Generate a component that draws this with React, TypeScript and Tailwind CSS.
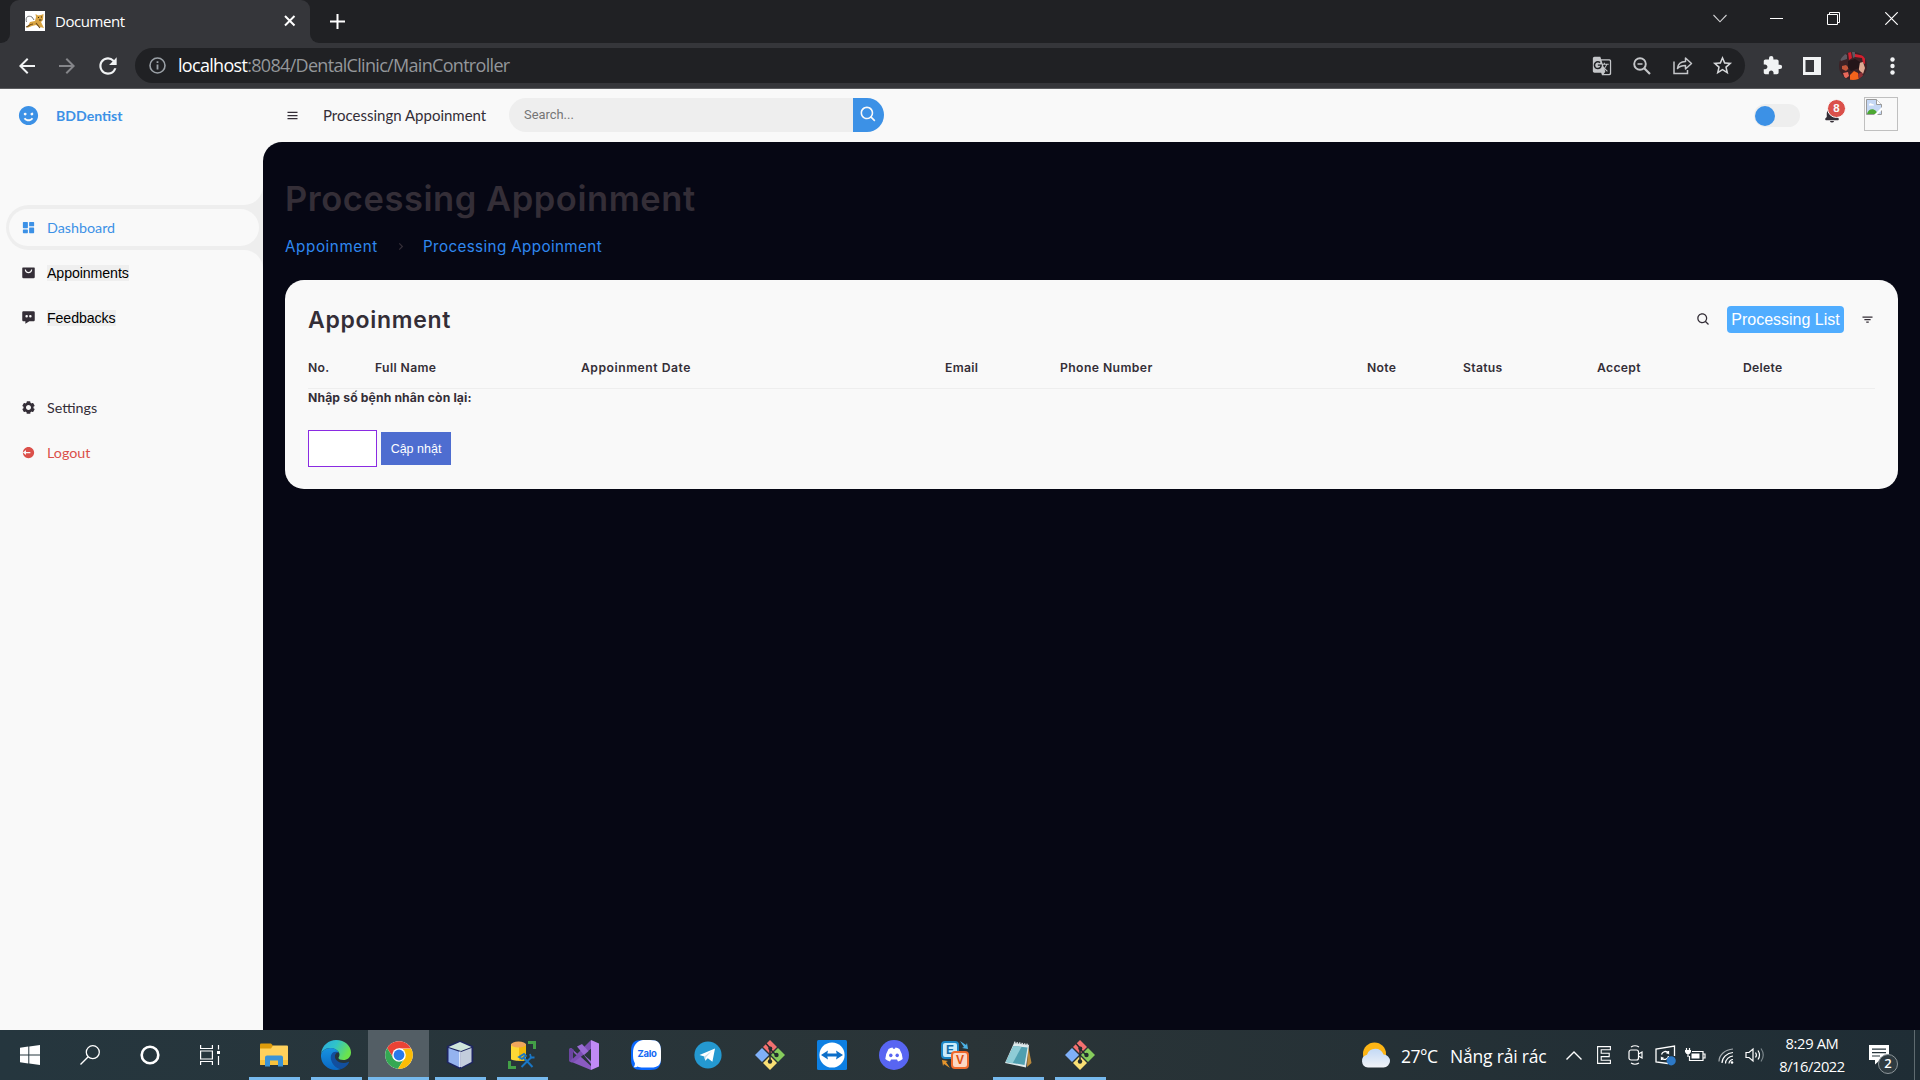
import React from "react";
import {
  BiMenu,
  BiSearch,
  BiFilter,
  BiChevronRight,
  BiSolidSmile,
  BiSolidDashboard,
  BiSolidShoppingBagAlt,
  BiSolidMessageDots,
  BiSolidCog,
  BiSolidLogOutCircle,
  BiSolidBell,
} from "react-icons/bi";
import { MdGTranslate, MdExtension, MdStarBorder, MdArrowBack, MdArrowForward, MdRefresh } from "react-icons/md";

/* ---------- Browser chrome ---------- */

function TomcatIcon() {
  return (
    <svg width="20" height="20" viewBox="0 0 20 20">
      <rect width="20" height="20" fill="#fff" />
      <path d="M2 17 L5 11 L10 10 L11 6 L10.500 3 L13 4.500 L16 4 L18.500 3 L18 9 L16 11 L19 17 L15 16 L11 14 L7 15 Z" fill="#d9a441" />
      <path d="M1 16 C4 15 5 13 8 13 M11 12 L15 17" stroke="#6b4a1a" strokeWidth="1.200" fill="none" />
      <path d="M1.500 11 C0 6 3 4 7 6 L9 9" stroke="#77787a" strokeWidth="1" fill="none" />
      <path d="M13 6.500h1M16 6h1M14 9h2.500" stroke="#3a2b12" strokeWidth="1" />
    </svg>
  );
}

function TabStrip() {
  return (
    <div className="flex h-[43px] bg-[#202124]">
      <div className="flex w-[10px] bg-[#35363a]">
        <div className="h-full w-full rounded-br-[9px] bg-[#202124]" />
      </div>
      <div className="flex h-full w-[300px] items-center rounded-t-[9px] bg-[#35363a] pb-[1px] pl-[15px] pr-[14px]">
        <TomcatIcon />
        <span className="ml-[10px] flex-1 font-['Open_Sans'] text-[15px] tracking-[-0.45px] text-white">Document</span>
        <svg width="12" height="12" viewBox="0 0 12 12" stroke="#fff" strokeWidth="2">
          <path d="M1 1l9.500 9.500M10.500 1L1 10.500" />
        </svg>
      </div>
      <div className="flex w-[10px] bg-[#35363a]">
        <div className="h-full w-full rounded-bl-[9px] bg-[#202124]" />
      </div>
      <div className="flex flex-1 items-center pl-[10px]">
        <svg width="15" height="15" viewBox="0 0 15 15" stroke="#fff" strokeWidth="2">
          <path d="M7.500 0v15M0 7.500h15" />
        </svg>
      </div>
      <div className="flex items-start pr-[22px] pt-[12px]">
        <svg className="mr-[43px] mt-[2px]" width="14" height="9" viewBox="0 0 14 9" fill="none" stroke="#d0d1d3" strokeWidth="1.100">
          <path d="M.5 1L7 7.800L13.500 1" />
        </svg>
        <svg className="mr-[44px]" width="13" height="13" viewBox="0 0 13 13" stroke="#fff">
          <path d="M0 6.500h13" />
        </svg>
        <svg className="mr-[45px]" width="13" height="13" viewBox="0 0 13 13" fill="none" stroke="#fff">
          <path d="M.5 2.500h10v10h-10zM2.500 2.500v-2h10v10h-2" />
        </svg>
        <svg width="13" height="13" viewBox="0 0 13 13" fill="none" stroke="#fff" strokeWidth="1.200">
          <path d="M.3 .3l12.400 12.400M12.700 .3L.3 12.700" />
        </svg>
      </div>
    </div>
  );
}

function Avatar() {
  return (
    <svg width="28" height="28" viewBox="0 0 28 28">
      <defs>
        <clipPath id="avatarClip">
          <circle cx="14" cy="14" r="14" />
        </clipPath>
      </defs>
      <g clipPath="url(#avatarClip)">
        <rect width="28" height="28" fill="#3c2226" />
        <path d="M9 0h3l1 6-3 2zM16 2l10 2v8l-2-1-1-5-7-1z" fill="#d3202f" />
        <path d="M0 6l5-5 3 2v4l-6 2zM13 0h3v5l-2 1z" fill="#5d5a63" />
        <path d="M3 14l4-1 3 3-3 3-4-2z" fill="#c4553a" />
        <path d="M20 11l4-1 2 6-2 6-4-4z" fill="#e0a992" />
        <path d="M9 9l7-2 5 3-1 6-8 3-3-3z" fill="#241519" />
        <path d="M11 23l4-4 4 2 1 7h-9z" fill="#f4631b" />
        <path d="M4 21l5-1 1 4-4 3z" fill="#e9685a" />
        <path d="M19 22l4-2 1 4-4 3z" fill="#8c2f36" />
      </g>
    </svg>
  );
}

function AddressBar() {
  return (
    <div className="flex h-[46px] items-center border-b border-[#5b5c5f] bg-[#35363a]">
      <MdArrowBack className="ml-[15px] text-[#f1f3f4]" size={24} />
      <MdArrowForward className="ml-[16px] text-[#85868a]" size={24} />
      <MdRefresh className="ml-[16px] text-[#f1f3f4]" size={26} />
      <div className="ml-[14px] flex h-[35px] w-[1610px] items-center rounded-full bg-[#202124] pl-[14px] pr-[11px]">
        <svg width="17" height="17" viewBox="0 0 17 17" fill="none" stroke="#9aa0a6" strokeWidth="1.600">
          <circle cx="8.500" cy="8.500" r="7.500" />
          <path d="M8.500 7.500v5M8.500 4.300v1.700" strokeWidth="1.800" />
        </svg>
        <span className="mt-[-2px] ml-[12px] flex-1 font-['Open_Sans'] text-[18px] leading-none tracking-[-0.69px] text-[#94979b]">
          <span className="text-white">localhost</span>:8084/DentalClinic/MainController
        </span>
        <MdGTranslate className="text-[#c4c6c9]" size={20} />
        <svg className="ml-[21px]" width="18" height="18" viewBox="0 0 18 18" fill="none" stroke="#c4c6c9" strokeWidth="1.900">
          <circle cx="7" cy="7" r="5.800" />
          <path d="M11.200 11.200l5.800 5.800" strokeWidth="2.200" />
          <path d="M4.500 7h5" strokeWidth="1.500" />
        </svg>
        <svg className="ml-[22px]" width="20" height="19" viewBox="0 0 20 19" fill="none" stroke="#c4c6c9" strokeWidth="1.500">
          <path d="M1 5.500v12h13.500v-3.500" />
          <path d="M4.500 12.500c.5-4.500 3.500-7 8-7V2l6 5.500-6 5.500V9.500c-4 0-6 .8-8 3z" strokeLinejoin="round" />
        </svg>
        <MdStarBorder className="ml-[18px] text-[#d5d7d9]" size={23} />
      </div>
      <MdExtension className="ml-[17px] text-[#f1f3f4]" size={21} />
      <svg className="ml-[20px]" width="18" height="18" viewBox="0 0 18 18">
        <rect width="18" height="18" fill="#f1f3f4" />
        <rect x="2.500" y="3" width="8.500" height="12" fill="#35363a" />
      </svg>
      <div className="ml-[18px]">
        <Avatar />
      </div>
      <svg className="ml-[23px]" width="5" height="18" viewBox="0 0 5 18" fill="#f1f3f4">
        <circle cx="2.500" cy="2.500" r="2.200" />
        <circle cx="2.500" cy="9" r="2.200" />
        <circle cx="2.500" cy="15.500" r="2.200" />
      </svg>
    </div>
  );
}

/* ---------- Page ---------- */

function MenuItem({ icon, children, className = "" }: { icon: React.ReactNode; children: React.ReactNode; className?: string }) {
  return (
    <li className={"flex h-[45px] items-center pl-[21px] " + className}>
      <span className="flex w-[26px]">{icon}</span>
      {children}
    </li>
  );
}

function Sidebar() {
  return (
    <aside className="flex w-[263px] flex-col bg-[#f9f9f9] font-['Lato'] text-[14.3px] text-[#342e37]">
      <div className="flex h-[53px] items-center pl-[17px] text-[#3c91e6]">
        <BiSolidSmile size={23} />
        <span className="ml-[16px] mt-[1px] text-[14.1px] font-bold">BDDentist</span>
      </div>
      <ul className="mt-[63px]">
        <li className="relative ml-[6px] h-[45px] rounded-l-full bg-[#eee] p-[4px] pl-[3px]">
          <div className="flex h-full items-center rounded-full bg-[#f9f9f9] pl-[12px] text-[#3c91e6]">
            <BiSolidDashboard size={15} />
            <span className="ml-[11px]">Dashboard</span>
          </div>
          <div className="absolute right-0 top-[-19px] size-[19px] bg-[#eee]">
            <div className="size-full rounded-br-full bg-[#f9f9f9]" />
          </div>
          <div className="absolute bottom-[-19px] right-0 size-[19px] bg-[#eee]">
            <div className="size-full rounded-tr-full bg-[#f9f9f9]" />
          </div>
        </li>
        <MenuItem icon={<BiSolidShoppingBagAlt size={15} />}>
          <span className="bg-[#efefef] font-['Liberation_Sans'] text-[14.2px] leading-[16px] tracking-[-0.1px] text-black">Appoinments</span>
        </MenuItem>
        <MenuItem icon={<BiSolidMessageDots size={15} />}>
          <span className="bg-[#efefef] font-['Liberation_Sans'] text-[14.2px] leading-[16px] tracking-[-0.1px] text-black">Feedbacks</span>
        </MenuItem>
      </ul>
      <ul className="mt-[45px]">
        <MenuItem icon={<BiSolidCog size={15} />}>Settings</MenuItem>
        <MenuItem className="text-[#db504a]" icon={<BiSolidLogOutCircle size={15} />}>
          Logout
        </MenuItem>
      </ul>
    </aside>
  );
}

function BrokenImage() {
  return (
    <div className="mt-[-2px] size-[34px] border border-[#c0c0c0] pl-[1px] pt-[1px]">
      <svg width="16" height="16" viewBox="0 0 16 16">
        <path d="M.5 .5h10l5 5v10h-15z" fill="#c5d8f5" stroke="#9a9a9a" />
        <path d="M3 6c0-2 2-2.500 3-1 1.500-.3 2 .5 2 1.500H3z" fill="#fff" />
        <path d="M1 15c1-5 6-6 9-3l2 3z" fill="#4ca832" />
        <path d="M10.500 .5v5h5" fill="#fff" stroke="#9a9a9a" />
        <path d="M8 16l8-8v3l-5 5z" fill="#fff" />
      </svg>
    </div>
  );
}

function Navbar() {
  return (
    <nav className="flex h-[53px] items-center bg-[#f9f9f9] pb-[1px] pl-[22px] pr-[22px] text-[#342e37]">
      <BiMenu size={15} />
      <span className="ml-[23px] mt-[1px] w-[186px] whitespace-nowrap font-['Lato'] text-[15px]">Processingn Appoinment</span>
      <div className="flex h-[34px] w-[375px] overflow-hidden rounded-full">
        <div className="flex flex-1 items-center bg-[#eee] pl-[15px] font-['Roboto'] text-[12.9px] text-[#757575]">Search...</div>
        <div className="flex w-[31px] items-center bg-[#3c91e6] pb-[1px] pl-[6px] text-[#f9f9f9]">
          <BiSearch size={19} />
        </div>
      </div>
      <div className="ml-auto mt-[1px] flex h-[23px] w-[46px] items-center rounded-full bg-[#eee] pl-[1px]">
        <div className="size-[20px] rounded-full bg-[#3c91e6]" />
      </div>
      <div className="relative ml-[23px] mr-[23px] w-[18px]">
        <BiSolidBell size={18} />
        <div className="absolute left-[4px] top-[-7px] flex size-[19px] items-center justify-center rounded-full border border-[#f9f9f9] bg-[#db504a] font-['Liberation_Sans'] text-[11.5px] font-bold text-[#f9f9f9]">
          8
        </div>
      </div>
      <BrokenImage />
    </nav>
  );
}

function TableHead() {
  return (
    <div className="flex h-[42px] items-center border-b border-[#eee] pt-[2px] text-[12.2px] font-semibold leading-none tracking-[0.3px]">
      <span className="w-[67px]">No.</span>
      <span className="w-[206px] tracking-[0.37px]">Full Name</span>
      <span className="w-[364px] tracking-[0.5px]">Appoinment Date</span>
      <span className="w-[115px]">Email</span>
      <span className="w-[307px] tracking-[0.4px]">Phone Number</span>
      <span className="w-[96px]">Note</span>
      <span className="w-[134px]">Status</span>
      <span className="w-[146px]">Accept</span>
      <span>Delete</span>
    </div>
  );
}

function Main() {
  return (
    <main className="flex-1 rounded-tl-[19px] bg-[#060714] px-[22px] font-['Inter'] text-[#342e37]">
      <h1 className="pt-[35px] text-[34.5px] font-semibold leading-[44px] tracking-[0.55px]">Processing Appoinment</h1>
      <div className="mt-[13px] flex h-[26px] items-center text-[15.2px] text-[#2f88f0]">
        <span className="w-[108px] tracking-[0.6px]">Appoinment</span>
        <BiChevronRight className="mt-[-2px] text-[#342e37]" size={15} />
        <span className="ml-[15px] tracking-[0.38px]">Processing Appoinment</span>
      </div>
      <section className="mt-[20px] h-[209px] rounded-[19px] bg-[#f9f9f9] px-[23px] pt-[22px]">
        <div className="flex h-[34px] items-center">
          <h3 className="flex-1 pt-[2px] text-[23px] font-semibold tracking-[0.7px]">Appoinment</h3>
          <BiSearch size={15} />
          <div className="ml-[16px] mt-[1px] flex h-[27px] w-[117px] items-center justify-center rounded-[4px] bg-[#50adff] font-['Liberation_Sans'] text-[16px] text-white">
            Processing List
          </div>
          <BiFilter className="ml-[16px]" size={15} />
        </div>
        <div className="mt-[11px]">
          <TableHead />
        </div>
        <p className="text-[12.2px] font-bold leading-[18px] tracking-[0.13px]">Nhập số bệnh nhân còn lại:</p>
        <div className="mt-[23px] flex items-center gap-[4px]">
          <div className="h-[37px] w-[69px] border border-[#8a2be2] bg-white" />
          <div className="flex h-[33px] w-[70px] items-center justify-center bg-[#4e6dd0] pt-[1px] font-['Liberation_Sans'] text-[12.5px] text-white">
            Cập nhật
          </div>
        </div>
      </section>
    </main>
  );
}

/* ---------- Taskbar ---------- */

const WindowsIcon = () => (
  <svg width="20" height="20" viewBox="0 0 20 20" fill="#fff">
    <path d="M0 2.800L8.300 1.600V9.500H0zM9.300 1.400L20 0v9.500H9.300zM0 10.500h8.300v7.900L0 17.200zM9.300 10.500H20V20L9.300 18.600z" />
  </svg>
);

const SearchGlass = () => (
  <svg width="20" height="20" viewBox="0 0 20 20" fill="none" stroke="#fff" strokeWidth="1.300">
    <circle cx="12.800" cy="7.200" r="6.500" />
    <path d="M8.200 11.800L.5 19.500" />
  </svg>
);

const CortanaIcon = () => (
  <svg width="20" height="20" viewBox="0 0 20 20">
    <circle cx="10" cy="10" r="8.300" fill="none" stroke="#fff" strokeWidth="2.600" />
  </svg>
);

const TaskViewIcon = () => (
  <svg width="20" height="20" viewBox="0 0 20 20" fill="none" stroke="#fff" strokeWidth="1.200">
    <path d="M.6 0v3.500h11.800V0M.6 20v-3.500h11.800V20M.6 6h11.800v8H.6zM18.500 0v4.500M18.500 11v9" />
    <rect x="17" y="6" width="3" height="3" fill="#fff" stroke="none" />
  </svg>
);

const ExplorerIcon = () => (
  <svg width="28" height="24" viewBox="0 0 28 24">
    <path d="M0 1.500Q0 .5 1 .5h10l2 2v5H0z" fill="#dd9b0b" />
    <path d="M0 5.500h11l2-3h14q1 0 1 1V21q0 1-1 1H1q-1 0-1-1z" fill="#ffd15c" />
    <path d="M0 17h28v4q0 1-1 1H1q-1 0-1-1z" fill="#f9c23c" />
    <path d="M5 23.500V14.500q0-2 2-2h14q2 0 2 2v9h-5v-6h-8v6z" fill="#3a93d6" />
  </svg>
);

const EdgeIcon = () => (
  <svg width="30" height="30" viewBox="0 0 30 30">
    <defs>
      <linearGradient id="edgeTop" x1="0" y1="0" x2="1" y2=".4">
        <stop offset="0" stopColor="#2ba8e0" />
        <stop offset=".5" stopColor="#30c3c9" />
        <stop offset="1" stopColor="#6be34c" />
      </linearGradient>
      <linearGradient id="edgeLow" x1="0" y1="0" x2="0" y2="1">
        <stop offset="0" stopColor="#1793e0" />
        <stop offset="1" stopColor="#0a68c4" />
      </linearGradient>
    </defs>
    <path d="M0 14C1 5 8 0 15 0c9 0 15 6 15 12.500 0 5-4 7.500-7.500 7.500-3 0-5-1-5-2 0-1 1-1.500 1-3.500C18.500 11 14 8 9.500 8 4.500 8 1 11 0 14z" fill="url(#edgeTop)" />
    <path d="M0 15C.5 11 4.500 8 9.500 8c4 0 7 2 8.300 4.500-5-2-8 2-7 7C12 26 17 28 20 29c-2 .8-4 1-5 1C6 30-.5 23 0 15z" fill="url(#edgeLow)" />
    <path d="M17 12.200c-5-1.500-8 2-7 7.300C11.500 26 17 29 20.500 29c3-1 6-3.500 7.500-6.500.3-.6-.3-.9-.8-.6C21 25 13 21 14 15.500c.3-1.500 1.500-3 3-3.300z" fill="#124f9e" />
  </svg>
);

const ChromeIcon = () => (
  <svg width="28" height="28" viewBox="0 0 28 28">
    <circle cx="14" cy="14" r="13.800" fill="#fff" />
    <path d="M14 7.500h12.100A13.800 13.800 0 0 0 2.100 7l6.200 10z" fill="#ea4335" />
    <path d="M2.100 7A13.800 13.800 0 0 0 13 27.800l6.500-10.500-11.100 0z" fill="#34a853" />
    <path d="M26.100 7.500A13.800 13.800 0 0 1 13 27.800l6.700-10.600L18 8z" fill="#fbbc05" />
    <circle cx="14" cy="14" r="6.800" fill="#fff" />
    <circle cx="14" cy="14" r="5.400" fill="#2a79ea" />
  </svg>
);

const NetBeansIcon = () => (
  <svg width="28" height="30" viewBox="0 0 28 30">
    <path d="M14 2l12 5v15l-12 6L2 22V7z" fill="#1d2560" stroke="#1d2560" strokeWidth="2.500" strokeLinejoin="round" />
    <path d="M14 2l11.500 5-10.500 4L2.500 7z" fill="#cfe5dc" />
    <path d="M2.500 8l11.500 4v15.500L2.500 22z" fill="#94b3ef" />
    <path d="M15 12l10.500-4v14L15 27.500z" fill="#c3cddc" />
    <path d="M14 11.500V27" stroke="#eef4ff" strokeWidth="1.500" />
  </svg>
);

const SqlIcon = () => (
  <svg width="28" height="28" viewBox="0 0 28 28">
    <path d="M3 3v15c0 2 15 3 15 0V3z" fill="#fdd835" />
    <path d="M11 5v15c4 0 7-1 7-2V3z" fill="#f2b90c" />
    <ellipse cx="10.500" cy="3.500" rx="7.500" ry="3" fill="#f0a65c" />
    <path d="M20 1.500h6.500V8M1.500 20v6.500H8" fill="none" stroke="#43a047" strokeWidth="3" />
    <path d="M13.500 26l10-10M24.500 26L15 16" stroke="#1976c5" strokeWidth="2" />
    <path d="M11 16l5-3 2 2-4 3zM22 13l1 3.500 3.500 0" fill="none" stroke="#1976c5" strokeWidth="1.800" />
  </svg>
);

const VisualStudioIcon = () => (
  <svg width="30" height="30" viewBox="0 0 30 30">
    <path d="M0 9l2-1 20 18v4L1.500 21.500 0 21z" fill="#8a5bc2" />
    <path d="M0 9l2.500-1L5 10v10l-3.500 2L0 21z" fill="#6b45a0" />
    <path d="M1 21L22 0v9L5 22l-3 .5z" fill="#7c50b4" />
    <path d="M22 0l8 3.500v23L22 30z" fill="#c08af5" />
    <path d="M8 6.500l5-2.500 9 10v10z" fill="#9a6bd4" />
    <path d="M4 12v6.500l3.500-3.200z" fill="#2a373d" />
    <path d="M22 9v12l-7-6z" fill="#2a373d" />
  </svg>
);

const ZaloIcon = () => (
  <div className="relative flex size-[30px] items-center justify-center">
    <svg className="absolute inset-0" width="30" height="30" viewBox="0 0 30 30">
      <path d="M11 0h8c8 0 11 3 11 11v8c0 8-3 11-11 11h-8C3 30 0 27 0 19v-8C0 3 3 0 11 0z" fill="#0a68ff" />
      <path d="M12 0h7c8 0 11 3 11 11v7c0 7-3 9.500-10 9.500h-8c-2 0-4-.4-5.500-1-1 .8-2.500 1-4 .8 1-1 1.500-2.500 1.400-4C2 20 2 17 2 13 2 5 6 1 12 0z" fill="#fff" />
    </svg>
    <span className="relative ml-[2px] mt-[-2px] font-['Inter'] text-[9.5px] font-bold tracking-[-0.3px] text-[#1268f3]">Zalo</span>
  </div>
);

const TelegramIcon = () => (
  <svg width="28" height="28" viewBox="0 0 28 28">
    <circle cx="14" cy="14" r="13.600" fill="#2498d0" />
    <path d="M5.500 14L21 7.500l-2.600 13.200-4.600-3.500-2.600 2.500-.9-4.300z" fill="#fff" />
    <path d="M10.300 15.400L18 9.800l-6.300 6.800-.5 3z" fill="#c4dcea" />
  </svg>
);

const GitIcon = () => (
  <svg width="30" height="30" viewBox="0 0 30 30">
    <path d="M15 0l7 7-7 7-7-7z" fill="#f2706f" />
    <path d="M23 8l7 7-7 7-7-7z" fill="#86cc5c" />
    <path d="M7 8l7 7-7 7-7-7z" fill="#7fb0f8" />
    <path d="M15 16l7 7-7 7-7-7z" fill="#f9df74" />
    <path d="M11 3.500l4 4.500v13M15 9l6 6" fill="none" stroke="#222b2e" strokeWidth="1.500" />
    <circle cx="15.300" cy="8.500" r="2" fill="#222b2e" />
    <circle cx="21.500" cy="15" r="2.200" fill="#222b2e" />
    <circle cx="15" cy="21.500" r="2.200" fill="#222b2e" />
  </svg>
);

const TeamViewerIcon = () => (
  <svg width="30" height="30" viewBox="0 0 30 30">
    <rect width="30" height="30" rx="1.500" fill="#0d7fe2" />
    <circle cx="15" cy="15" r="12.600" fill="#fff" />
    <path d="M4 15l7-4.500-.7 3h9.400l-.7-3 7 4.500-7 4.500.7-3h-9.400l.7 3z" fill="#0d6fc9" />
  </svg>
);

const DiscordIcon = () => (
  <svg width="30" height="30" viewBox="0 0 30 30">
    <circle cx="15" cy="15" r="15" fill="#5865f2" />
    <path d="M9.500 9q2-1.200 4-1.500l.6 1.200h1.800l.6-1.200q2 .3 4 1.500 3 5 3.200 10-2 1.800-4.700 2.500l-1-1.900h-6l-1 1.900Q8.300 20.800 6.300 19q.2-5 3.200-10z" fill="#fff" />
    <ellipse cx="11.800" cy="15.300" rx="1.700" ry="1.900" fill="#5865f2" />
    <ellipse cx="18.200" cy="15.300" rx="1.700" ry="1.900" fill="#5865f2" />
  </svg>
);

const EvIcon = () => (
  <div className="relative mr-[2px] size-[30px] font-['Liberation_Sans'] font-bold">
    <svg className="absolute inset-0" width="30" height="30" viewBox="0 0 30 30">
      <path d="M20 1l6 4 1-2 1 6-6-1 2-1z" fill="#4cb2e6" />
      <path d="M10 28l-6-4-1 2-1-6 6 1-2 1z" fill="#e5952c" />
    </svg>
    <div className="absolute left-px top-px flex size-[18px] items-center justify-center rounded-[4px] border-2 border-[#1c86c5] bg-[#c9ecfb] text-[12px] leading-none text-[#136aa5]">E</div>
    <div className="absolute bottom-px right-px flex size-[18px] items-center justify-center rounded-[4px] border-2 border-[#ef6a2c] bg-[#fbd8c4] text-[12px] leading-none text-[#e04f10]">V</div>
  </div>
);

const NotepadIcon = () => (
  <svg width="28" height="28" viewBox="0 0 28 28">
    <path d="M24 4l3.500 18-4.500 4z" fill="#b98a3e" />
    <path d="M10 2l15 2-3 22.500L1 22z" fill="#dfeaec" />
    <path d="M9.500 5l14 1.500-3 17.500L2 21z" fill="#4f9fb0" />
    <path d="M9.500 5l8 1-9 16.500L2 21z" fill="#8fccd6" />
    <path d="M10 1.500l15 2.500" stroke="#d3d9dc" strokeWidth="2" strokeDasharray="1.500 1" />
  </svg>
);

const systemButtons = [WindowsIcon, SearchGlass, CortanaIcon, TaskViewIcon];

const apps: { Icon: () => React.JSX.Element; state?: "open" | "active" }[] = [
  { Icon: ExplorerIcon, state: "open" },
  { Icon: EdgeIcon, state: "open" },
  { Icon: ChromeIcon, state: "active" },
  { Icon: NetBeansIcon, state: "open" },
  { Icon: SqlIcon, state: "open" },
  { Icon: VisualStudioIcon },
  { Icon: ZaloIcon },
  { Icon: TelegramIcon },
  { Icon: GitIcon },
  { Icon: TeamViewerIcon },
  { Icon: DiscordIcon },
  { Icon: EvIcon },
  { Icon: NotepadIcon, state: "open" },
  { Icon: GitIcon, state: "open" },
];

function Weather() {
  return (
    <div className="flex items-center">
      <svg width="29" height="26" viewBox="0 0 29 26">
        <defs>
          <linearGradient id="cloud" x1="0" y1="0" x2="0" y2="1">
            <stop offset="0" stopColor="#c3d9f5" />
            <stop offset="1" stopColor="#f1f3f7" />
          </linearGradient>
        </defs>
        <circle cx="13.500" cy="12" r="11.500" fill="#fdb515" />
        <path d="M7 25.500a6.500 6.500 0 0 1-1-12.800A8.800 8.800 0 0 1 22.500 12.500 6.500 6.500 0 0 1 22.500 25.500z" fill="url(#cloud)" />
      </svg>
      <span className="ml-[11px] mt-[2px] w-[49px] tracking-[-0.5px]">27°C</span>
      <span className="mt-[2px] w-[116px] tracking-[-0.2px]">Nắng rải rác</span>
    </div>
  );
}

function Tray() {
  return (
    <div className="flex h-full items-center font-['Open_Sans'] text-[17.5px] text-white">
      <Weather />
      <svg width="16" height="9" viewBox="0 0 16 9" fill="none" stroke="#fff" strokeWidth="1.400">
        <path d="M.5 8.500L8 1l7.500 7.500" />
      </svg>
      <svg className="ml-[15px]" width="14" height="18" viewBox="0 0 14 18" fill="none" stroke="#fff" strokeWidth="1.100">
        <path d="M.6 .6h12.800v3.200H4.200v3.400h8v3.400h-8v3.600h9.200v3.200H.6z" />
      </svg>
      <svg className="ml-[17px]" width="15" height="20" viewBox="0 0 15 20" fill="none" stroke="#fff" strokeWidth="1.200">
        <rect x="1" y="5" width="9.500" height="10" rx="2" />
        <path d="M10.500 9l3.500-2v6l-3.500-2M3 2q4-2.500 8 0M3 18q4 2.500 8 0" />
      </svg>
      <svg className="ml-[12px]" width="21" height="21" viewBox="0 0 21 21" fill="none" stroke="#fff" strokeWidth="1.300">
        <path d="M13 18.500L1 17V4l18.500-3v10" />
        <path d="M6.500 9.500a4 4 0 0 1 7-1.500v-2M13.500 8h-2M13.500 11a4 4 0 0 1-7 2v2M6.500 13h2" />
        <circle cx="16.200" cy="15.800" r="4.600" fill="#2d79c7" stroke="none" />
      </svg>
      <svg className="ml-[9px]" width="21" height="15" viewBox="0 0 21 15" fill="none" stroke="#fff" strokeWidth="1.200">
        <path d="M7 3.500h11v9H4.500V8M18 6h2v4h-2" />
        <path d="M1.500 0v2M4.500 0v2M3 5v4" />
        <path d="M0 2h6v2L4.500 6h-3L0 4z" fill="#fff" stroke="none" />
        <rect x="6.500" y="5.500" width="8" height="5" fill="#fff" stroke="none" />
      </svg>
      <svg className="ml-[12px] mt-[2px]" width="16" height="16" viewBox="0 0 16 16" fill="none" stroke="#fff" strokeWidth="1.200">
        <path d="M1 13.500C1 7 7 1.500 15 1" stroke="#a5acb0" />
        <path d="M4 15C4 9.500 9 5 15 4.500M7.500 15.500C7.500 11.500 11 8.500 15 8" />
        <path d="M11 15.500c0-2 2-4 4-4" />
        <circle cx="14" cy="14.500" r="1.300" fill="#fff" stroke="none" />
      </svg>
      <svg className="ml-[11px]" width="20" height="16" viewBox="0 0 20 16" fill="none" stroke="#fff" strokeWidth="1.200">
        <path d="M1 5.500h3L8 2v12l-4-3.500H1z" />
        <path d="M10.500 5.500q1.800 2.500 0 5M13 3.500q3 4.500 0 9" />
        <path d="M16 1.500q4.500 6.500 0 13" stroke="#7b868b" />
      </svg>
      <div className="ml-[7px] flex w-[80px] flex-col items-center text-[14.7px] leading-[23px] tracking-[-0.45px]">
        <span className="tracking-[-0.35px]">8:29 AM</span>
        <span>8/16/2022</span>
      </div>
      <div className="relative ml-[17px] mt-[-1px] h-[20px] w-[20px]">
        <svg width="20" height="20" viewBox="0 0 20 20">
          <path d="M0 0h20v15h-9l-5 4.500V15H0z" fill="#fff" />
          <path d="M3 4.200h14M3 7.600h14M3 11h8" stroke="#26343b" strokeWidth="1.200" />
        </svg>
        <div className="absolute left-[9px] top-[9px] flex size-[20px] items-center justify-center rounded-full border border-[#8d969a] bg-[#2f3b41] text-[13px] font-semibold leading-none">2</div>
      </div>
      <div className="ml-[25px] h-full w-[6px] border-l border-[#5f6b70]" />
    </div>
  );
}

function Taskbar() {
  return (
    <footer className="flex h-[50px] items-stretch justify-between bg-gradient-to-r from-[#25363e] via-[#2a3437] to-[#1f2d35]">
      <div className="flex">
        {systemButtons.map((Icon, i) => (
          <div key={i} className="flex w-[60px] items-center justify-center">
            <Icon />
          </div>
        ))}
        <div className="ml-[3px] flex">
          {apps.map(({ Icon, state }, i) => (
            <div key={i} className={"flex flex-col items-center " + (state === "active" ? "ml-px w-[61px] bg-[#535e65]" : "w-[62px]")}>
              <div className="flex h-[47px] items-center pt-[3px]">
                <Icon />
              </div>
              {state && <div className={"h-[3px] bg-[#76b9ed] " + (state === "active" ? "w-full" : "w-[51px]")} />}
            </div>
          ))}
        </div>
      </div>
      <Tray />
    </footer>
  );
}

export default function App() {
  return (
    <div className="flex h-[1080px] w-[1920px] flex-col overflow-hidden bg-[#f9f9f9]">
      <TabStrip />
      <AddressBar />
      <div className="flex min-h-0 flex-1">
        <Sidebar />
        <div className="flex flex-1 flex-col">
          <Navbar />
          <Main />
        </div>
      </div>
      <Taskbar />
    </div>
  );
}
